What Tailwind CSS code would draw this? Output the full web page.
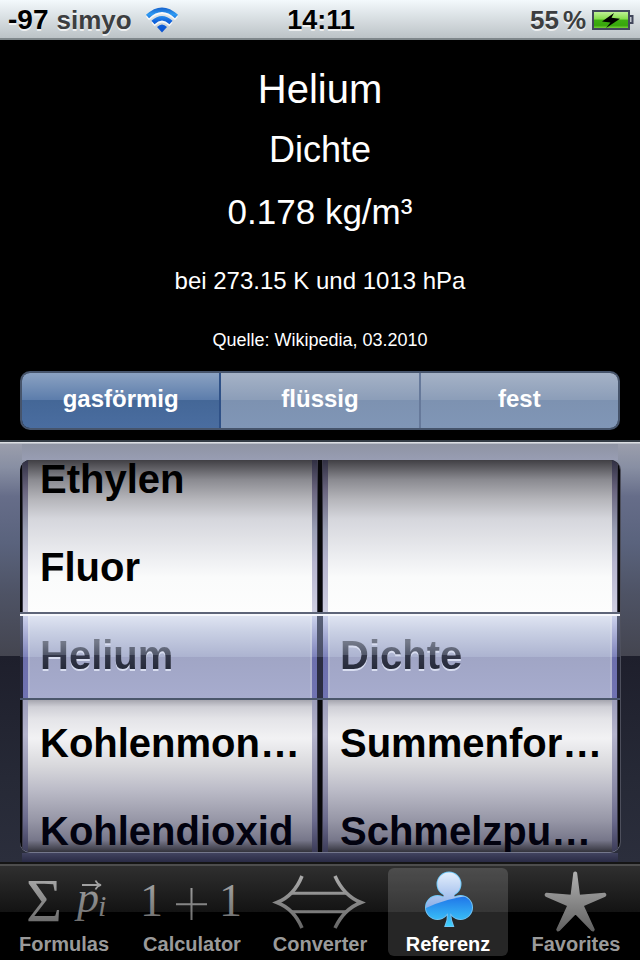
<!DOCTYPE html>
<html lang="de">
<head>
<meta charset="utf-8">
<meta name="viewport" content="width=device-width, initial-scale=1">
<title>Referenz</title>
<script src="https://cdn.jsdelivr.net/npm/@tailwindcss/browser@4"></script>
</head>
<body class="flex min-h-screen flex-col bg-black font-['Liberation_Sans',Arial,sans-serif] text-white">

<!-- Status bar -->
<header class="grid h-10 grid-cols-[1fr_auto_1fr] items-center border-b-2 border-[#7f878b] bg-linear-to-b from-[#f3f9fc] to-[#bcc3c7] pr-1.5 pl-2 text-[26px] leading-10 font-bold text-[#3c3e40] text-shadow-[0_2px_0_rgb(255_255_255/0.7)]">
  <div class="flex items-center">
    <span class="text-[28px] text-black">-97</span>
    <span class="ml-2">simyo</span>
    <svg class="ml-3 h-7 w-9" viewBox="0 0 36 28" fill="none" role="img" aria-label="WLAN">
      <defs><linearGradient id="wifi" x1="0" y1="0" x2="0" y2="28" gradientUnits="userSpaceOnUse"><stop offset="0" stop-color="#1055c4"/><stop offset=".3" stop-color="#2f9af2"/><stop offset=".55" stop-color="#1163dc"/><stop offset="1" stop-color="#0a50cf"/></linearGradient></defs>
      <g stroke="#fff" stroke-opacity=".8" stroke-width="4.500" transform="translate(0 2)"><path d="M3.500 10.500Q18 -3 32.500 10.500"/><path d="M9 16.500Q18 8 27 16.500"/></g>
      <g stroke="url(#wifi)" stroke-width="4.500"><path d="M3.500 10.500Q18 -3 32.500 10.500"/><path d="M9 16.500Q18 8 27 16.500"/></g>
      <path d="M13 21Q18 16 23 21L18 26.500Z" fill="url(#wifi)"/>
    </svg>
  </div>
  <time class="text-[27px] text-black">14:11</time>
  <div class="flex items-center justify-end">
    <span>55</span><span class="ml-1">%</span>
    <svg class="ml-1.5 h-5 w-[42px]" viewBox="0 0 42 20" role="img" aria-label="Akku lädt">
      <defs><linearGradient id="batt" x1="0" y1="0" x2="0" y2="1"><stop offset="0" stop-color="#c6f3a0"/><stop offset=".45" stop-color="#85dc4a"/><stop offset=".5" stop-color="#3fae12"/><stop offset=".8" stop-color="#37a60c"/><stop offset="1" stop-color="#8ee04a"/></linearGradient></defs>
      <rect x="1" y="1" width="36" height="18" fill="url(#batt)" stroke="#42475c" stroke-width="2"/>
      <path d="M38 6h2.500v7H38" fill="#c3c8d0" stroke="#42475c" stroke-width="2"/>
      <path d="M22 3L10 11.500l8.500 1-4.500 5.500L28 8.800l-8.500-1Z" fill="#000"/>
    </svg>
  </div>
</header>

<main class="flex flex-1 flex-col">
  <section class="flex flex-col px-5 pt-[19px] pb-2.5 text-center">
    <h1 class="text-[40px] leading-[60px]">Helium</h1>
    <h2 class="text-4xl leading-[62px]">Dichte</h2>
    <p class="text-[35px] leading-[62px]">0.178 kg/m³</p>
    <p class="text-2xl leading-[76px]">bei 273.15 K und 1013 hPa</p>
    <p class="text-lg leading-[42px]">Quelle: Wikipedia, 03.2010</p>

    <!-- Phase selector -->
    <div class="mt-2.5 flex h-[59px] overflow-hidden rounded-[10px] border-2 border-[#46546b] text-2xl font-bold text-shadow-[0_-2px_0_rgb(0_0_0/0.4)]" role="group" aria-label="Phase">
      <button type="button" aria-pressed="true" class="flex-1 border-r-2 border-[#2f5187] bg-[linear-gradient(#8ba2c2,#5b7cab_50%,#446797_50%,#4a6da0)] pb-1">gasförmig</button>
      <button type="button" aria-pressed="false" class="flex-1 border-r-2 border-[#66799a] bg-[linear-gradient(#a5b2c6,#8b9db8_50%,#7d92b1_50%,#8096b6)] pb-1">flüssig</button>
      <button type="button" aria-pressed="false" class="flex-1 bg-[linear-gradient(#a5b2c6,#8b9db8_50%,#7d92b1_50%,#8096b6)] pb-1">fest</button>
    </div>
  </section>

  <!-- Picker -->
  <section class="flex flex-1 flex-col border-t-2 border-[#333b44] bg-[linear-gradient(#9c9fad,#888fa3_6%,#666d89_13%,#5a637d_24%,#4e5365_36%,#444550_51%,#1e1f2c_51%,#262936_80%,#2b2e3c)]">
    <div class="h-0.5 bg-linear-to-b from-[#eceef1] to-[#aaafb9]"></div>
    <div class="mx-[22px] h-4 bg-linear-to-b from-[#8f94a3] to-[#989db3]"></div>
    <div class="relative mx-5 flex h-[392px] gap-1 overflow-hidden rounded-[10px] bg-[#08080a] px-[2px] shadow-[0_1px_0_#74778c,1px_0_0_#4d4f5c]">

      <div class="flex min-w-0 flex-1 border-x border-[#3d3c4b] bg-[linear-gradient(#302f42,#6b6680_8%,#9a9fb5_18%,#b6b5cf_26%,#cdcde0_38%,#9b9bb8_61%,#b4b4cc_70%,#8a8aa6_84%,#6a6a8c_92%,#3b3b58)] px-[5px]">
        <div role="listbox" aria-label="Stoff" class="flex min-w-0 flex-1 flex-col justify-center overflow-hidden bg-[linear-gradient(#403f44,#8a8a90_5%,#b5b5ba_10%,#d5d6dc_15%,#e6e7eb_22%,#fafbfb_30%,#fdfdfd_39%,#a0a0aa_61%,#cfcfd6_63%,#e4e4e8_66%,#f2f2f4_71%,#d8d8dc_78%,#bcbcc8_84%,#9696a6_92%,#77778a_97%,#33333c)] text-[40px] leading-[86px] font-bold text-black">
          <button type="button" role="option" aria-selected="false" class="h-[88px] shrink-0 pb-0.5 pl-3 text-left whitespace-nowrap">Ethylen</button>
          <button type="button" role="option" aria-selected="false" class="h-[88px] shrink-0 pb-0.5 pl-3 text-left whitespace-nowrap">Fluor</button>
          <button type="button" role="option" aria-selected="true" class="relative z-20 h-[88px] shrink-0 pb-0.5 pl-3 text-left whitespace-nowrap drop-shadow-[0_2px_0_#d8ddf0]"><span class="bg-[linear-gradient(#747a8a_20%,#51576a_50%,#33374a_50%,#272b3b_80%)] bg-clip-text text-transparent">Helium</span></button>
          <button type="button" role="option" aria-selected="false" class="h-[88px] shrink-0 pb-0.5 pl-3 text-left whitespace-nowrap">Kohlenmon…</button>
          <button type="button" role="option" aria-selected="false" class="h-[88px] shrink-0 pb-0.5 pl-3 text-left whitespace-nowrap text-[#02020f]">Kohlendioxid</button>
        </div>
      </div>

      <div class="flex min-w-0 flex-1 border-x border-[#3d3c4b] bg-[linear-gradient(#302f42,#6b6680_8%,#9a9fb5_18%,#b6b5cf_26%,#cdcde0_38%,#9b9bb8_61%,#b4b4cc_70%,#8a8aa6_84%,#6a6a8c_92%,#3b3b58)] px-[5px]">
        <div role="listbox" aria-label="Eigenschaft" class="flex min-w-0 flex-1 flex-col justify-center overflow-hidden bg-[linear-gradient(#403f44,#8a8a90_5%,#b5b5ba_10%,#d5d6dc_15%,#e6e7eb_22%,#fafbfb_30%,#fdfdfd_39%,#a0a0aa_61%,#cfcfd6_63%,#e4e4e8_66%,#f2f2f4_71%,#d8d8dc_78%,#bcbcc8_84%,#9696a6_92%,#77778a_97%,#33333c)] text-[40px] leading-[86px] font-bold text-black">
          <div class="h-[88px] shrink-0"></div>
          <div class="h-[88px] shrink-0"></div>
          <button type="button" role="option" aria-selected="true" class="relative z-20 h-[88px] shrink-0 pb-0.5 pl-3 text-left whitespace-nowrap drop-shadow-[0_2px_0_#d8ddf0]"><span class="bg-[linear-gradient(#747a8a_20%,#51576a_50%,#33374a_50%,#272b3b_80%)] bg-clip-text text-transparent">Dichte</span></button>
          <button type="button" role="option" aria-selected="false" class="h-[88px] shrink-0 pb-0.5 pl-3 text-left whitespace-nowrap">Summenfor…</button>
          <button type="button" role="option" aria-selected="false" class="h-[88px] shrink-0 pb-0.5 pl-3 text-left whitespace-nowrap text-[#02020f]">Schmelzpu…</button>
        </div>
      </div>

      <!-- Selection bar -->
      <div class="absolute inset-x-0 top-1/2 z-10 flex h-[88px] -translate-y-1/2 flex-col border-y-2 border-t-[#5d6478] border-b-[#4a566b]">
        <div class="h-0.5 bg-[#f6f7fc]"></div>
        <div class="flex flex-1">
          <div class="w-[3px] bg-[linear-gradient(#596078,#3d4055_50%,#25273a_50%,#25273a)]"></div>
          <div class="w-[5px] bg-[linear-gradient(#ccd2ec,#7e83bb_50%,#6d70ad_50%,#7073b2)]"></div>
          <div class="flex-1 border-x-2 border-white/15 bg-[linear-gradient(#dfe4f2,#c8cfe3_20%,#acb3d0_50%,#a0a5c5_50%,#a7acce)] bg-origin-border"></div>
          <div class="w-[5px] bg-[linear-gradient(#ccd2ec,#7e83bb_50%,#6d70ad_50%,#7073b2)]"></div>
          <div class="w-1.5 bg-[linear-gradient(#596078,#4a4e66_50%,#2b2d42_50%,#2b2d42)]"></div>
          <div class="w-[5px] bg-[linear-gradient(#ccd2ec,#7e83bb_50%,#6d70ad_50%,#7073b2)]"></div>
          <div class="flex-1 border-x-2 border-white/15 bg-[linear-gradient(#dfe4f2,#c8cfe3_20%,#acb3d0_50%,#a0a5c5_50%,#a7acce)] bg-origin-border"></div>
          <div class="w-[5px] bg-[linear-gradient(#ccd2ec,#7e83bb_50%,#6d70ad_50%,#7073b2)]"></div>
          <div class="w-[3px] bg-[linear-gradient(#596078,#3d4055_50%,#25273a_50%,#25273a)]"></div>
        </div>
      </div>
    </div>
    <div class="mx-[22px] mt-px h-[9px] bg-linear-to-b from-[#41435f] to-[#292a44]"></div>
  </section>
</main>

<!-- Tab bar -->
<nav class="grid grid-cols-5 border-t-2 border-[#151515] bg-[linear-gradient(#4d4d4d,#4d4d4d_2px,#2f2f2f_2px,#131313_48px,#000_48px)] pt-1 pb-1 text-center text-xl leading-6 font-bold text-[#9a9a9a]">
  <svg class="absolute size-0" aria-hidden="true"><defs>
    <linearGradient id="grey" x1="0" y1="4" x2="0" y2="64" gradientUnits="userSpaceOnUse"><stop offset="0" stop-color="#b0b0b0"/><stop offset="1" stop-color="#606060"/></linearGradient>
  </defs></svg>
  <a href="#formulas" class="mx-1 flex flex-col items-center">
    <svg class="h-16 w-[120px] overflow-visible" viewBox="0 0 120 64" fill="url(#grey)" font-family="'Liberation Serif',serif" font-weight="400" aria-hidden="true">
      <text x="22" y="53" font-size="62">Σ</text>
      <text x="73" y="44" font-size="44" font-style="italic">p</text>
      <text x="94" y="48" font-size="30" font-style="italic">i</text>
      <path d="M78 17H96M91.500 12.500Q93 16 97 17Q93 18 91.500 21.500" fill="none" stroke="#a0a0a0" stroke-width="1.800"/>
    </svg>
    Formulas
  </a>
  <a href="#calculator" class="mx-1 flex flex-col items-center">
    <svg class="h-16 w-[120px]" viewBox="0 0 120 64" fill="url(#grey)" font-family="'Liberation Serif',serif" font-weight="400" aria-hidden="true">
      <text x="8" y="48" font-size="46">1</text>
      <text x="87" y="48" font-size="46">1</text>
      <path d="M44 35.200H75V37.200H44ZM58.500 20H60.500V52H58.500Z"/>
    </svg>
    Calculator
  </a>
  <a href="#converter" class="mx-1 flex flex-col items-center">
    <svg class="h-16 w-[120px]" viewBox="0 0 120 64" fill="none" stroke="url(#grey)" stroke-width="3.500" aria-hidden="true">
      <path d="M42 8Q34 28 17 34.500Q34 41 42 60"/>
      <path d="M75 8Q84 28 101 34.500Q84 41 75 60"/>
      <path d="M32 24.500H86V26H32ZM32 43H86V44.500H32Z" fill="url(#grey)" stroke-width="1.500"/>
    </svg>
    Converter
  </a>
  <a href="#referenz" aria-current="page" class="mx-1 flex flex-col items-center rounded-md bg-white/15 text-white">
    <svg class="h-16 w-[120px]" viewBox="0 0 120 64" aria-hidden="true">
      <defs>
        <linearGradient id="light" x1="0" y1="4" x2="0" y2="42" gradientUnits="userSpaceOnUse"><stop offset="0" stop-color="#e4effc"/><stop offset="1" stop-color="#86aae6"/></linearGradient>
        <linearGradient id="deep" x1="0" y1="28" x2="0" y2="58" gradientUnits="userSpaceOnUse"><stop offset="0" stop-color="#1f74e8"/><stop offset="1" stop-color="#3fd0fb"/></linearGradient>
        <clipPath id="club"><circle cx="61" cy="16" r="11.500"/><circle cx="49.500" cy="39.500" r="11.500"/><circle cx="72.500" cy="39.500" r="11.500"/><path d="M54.500 24Q57 27 54 31L54 48L61 45L68 48V31Q65 27 67.500 24Z"/><path d="M60 44H62L63 52L65 58H57.500L59.500 52Z"/></clipPath>
      </defs>
      <g fill="none" stroke="#6fc8f8" stroke-width="2"><circle cx="61" cy="16" r="11.500"/><circle cx="49.500" cy="39.500" r="11.500"/><circle cx="72.500" cy="39.500" r="11.500"/><path d="M60 44H62L63 52L65 58H57.500L59.500 52Z"/></g>
      <g clip-path="url(#club)"><path d="M0 0H120V64H0Z" fill="url(#light)"/><path d="M36 41Q58 30 86 27V64H36Z" fill="url(#deep)"/></g>
    </svg>
    Referenz
  </a>
  <a href="#favorites" class="mx-1 flex flex-col items-center">
    <svg class="h-16 w-[120px]" viewBox="0 0 120 64" fill="url(#grey)" stroke="url(#grey)" stroke-width="1.500" stroke-linejoin="round" aria-hidden="true">
      <path d="M58 5Q59.200 3.500 60.400 5L63.300 27.500L88.500 25.500Q90.500 26.500 89 28L67 37.500L78 61.500Q77.500 63.500 76 62.500L59.500 45.500L43 62.500Q41.500 63.500 41 61.500L52 37.500L30 28Q28.500 26.500 30.500 25.500L55.300 27.500Z"/>
    </svg>
    Favorites
  </a>
</nav>
</body>
</html>
